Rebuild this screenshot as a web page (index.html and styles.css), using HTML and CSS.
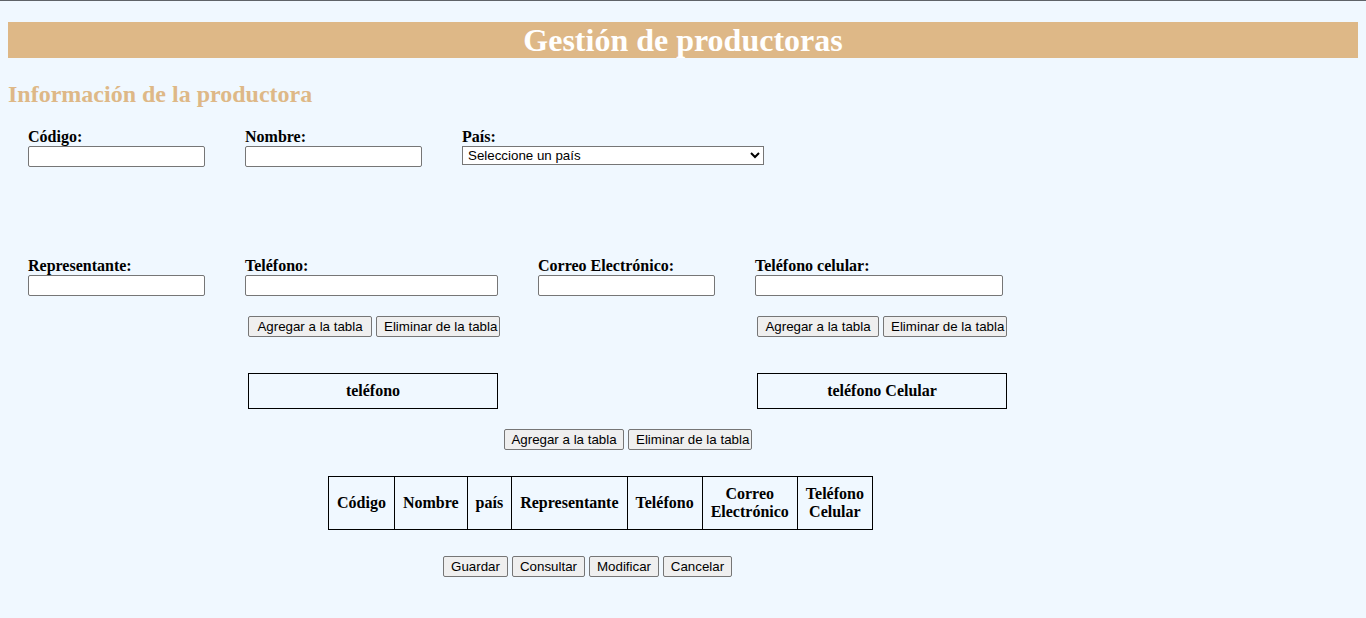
FILE: index.html
```html
<!DOCTYPE html>
<html lang="es">
<head>
<meta charset="utf-8">
<title>Gestión de productoras</title>
<link rel="stylesheet" href="styles.css">
</head>
<body>
<h1 class="title">Gestión de productoras</h1>
<h2 class="subtitle">Información de la productora</h2>
<form class="form">
  <div class="row row-top">
    <div class="field w-sm">
      <label class="lbl" for="codigo">Código:</label>
      <input class="inp w-sm" id="codigo" type="text">
    </div>
    <div class="field w-sm">
      <label class="lbl" for="nombre">Nombre:</label>
      <input class="inp w-sm" id="nombre" type="text">
    </div>
    <div class="field w-pais">
      <label class="lbl" for="pais">País:</label>
      <select class="sel" id="pais">
        <option>Seleccione un país</option>
      </select>
    </div>
  </div>

  <div class="row row-bottom">
    <div class="field w-sm">
      <label class="lbl" for="repr">Representante:</label>
      <input class="inp w-sm" id="repr" type="text">
    </div>
    <div class="field w-tel">
      <label class="lbl" for="tel">Teléfono:</label>
      <input class="inp w-tel" id="tel" type="text">
      <div class="btns btns-tel">
        <button type="button" class="btn btn-add">Agregar a la tabla</button>
        <button type="button" class="btn btn-del">Eliminar de la tabla</button>
      </div>
      <table class="mini mini-tel">
        <tr><th>teléfono</th></tr>
      </table>
    </div>
    <div class="field w-sm">
      <label class="lbl" for="correo">Correo Electrónico:</label>
      <input class="inp w-sm" id="correo" type="text">
    </div>
    <div class="field w-cel">
      <label class="lbl" for="cel">Teléfono celular:</label>
      <input class="inp w-celinp" id="cel" type="text">
      <div class="btns btns-cel">
        <button type="button" class="btn btn-add btn-add-sm">Agregar a la tabla</button>
        <button type="button" class="btn btn-del">Eliminar de la tabla</button>
      </div>
      <table class="mini mini-cel">
        <tr><th>teléfono Celular</th></tr>
      </table>
    </div>
  </div>

  <div class="btns btns-center">
    <button type="button" class="btn btn-add btn-add-xs">Agregar a la tabla</button>
    <button type="button" class="btn btn-del">Eliminar de la tabla</button>
  </div>

  <table class="main">
    <tr>
      <th>Código</th>
      <th>Nombre</th>
      <th>país</th>
      <th>Representante</th>
      <th>Teléfono</th>
      <th>Correo<br>Electrónico</th>
      <th>Teléfono<br>Celular</th>
    </tr>
  </table>

  <div class="btns btns-actions">
    <button type="button" class="btn btn-guardar">Guardar</button>
    <button type="button" class="btn btn-consultar">Consultar</button>
    <button type="button" class="btn btn-modificar">Modificar</button>
    <button type="button" class="btn btn-cancelar">Cancelar</button>
  </div>
</form>
</body>
</html>
```
FILE: styles.css
```css
html {
  background: #f0f8ff;
}
body {
  margin: 0 8px;
  padding-top: 0.1px;
  font-family: "Liberation Serif", "Times New Roman", serif;
  font-size: 16px;
  color: #000;
  position: relative;
}
body::before {
  content: "";
  position: fixed;
  top: 0;
  left: 0;
  right: 0;
  height: 1px;
  background: #5f6368;
}
.title {
  margin: 22px 0 0;
  height: 36px;
  line-height: 36px;
  background: #deb887;
  color: #fff;
  font-size: 32px;
  font-weight: bold;
  text-align: center;
}
.subtitle {
  margin: 22px 0 20px;
  line-height: 28px;
  font-size: 24px;
  font-weight: bold;
  color: #deb887;
}
.form {
  display: flex;
  flex-direction: column;
  align-items: flex-start;
}
.row {
  display: flex;
  gap: 40px;
  padding-left: 20px;
  align-items: flex-start;
}
.row-bottom {
  margin-top: 90px;
}
.field {
  display: flex;
  flex-direction: column;
  align-items: flex-start;
}
.lbl {
  display: block;
  font-weight: bold;
  line-height: 18px;
  height: 18px;
  white-space: nowrap;
}
.inp {
  box-sizing: border-box;
  height: 21px;
  margin: 0;
  background: #fff;
  border: 1px solid #767676;
  border-radius: 2px;
  padding: 1px 2px;
  font-family: "Liberation Sans", Arial, sans-serif;
  font-size: 13.33px;
}
.w-sm { width: 177px; }
.w-tel { width: 253px; }
.w-cel { width: 252px; }
.w-celinp { width: 248px; }
.w-pais { width: 302px; }
.sel {
  box-sizing: border-box;
  width: 302px;
  height: 19px;
  margin: 0;
  font-family: "Liberation Sans", Arial, sans-serif;
  font-size: 13.33px;
  background: #fff;
  border: 1px solid #767676;
  border-radius: 0;
  padding: 0 0 0 1px;
  color: #000;
}
.btns {
  display: flex;
  gap: 4px;
}
.btn {
  box-sizing: border-box;
  height: 21px;
  margin: 0;
  padding: 1px 6px;
  border: 1px solid #767676;
  border-radius: 2px;
  background: #efefef;
  color: #000;
  font-family: "Liberation Sans", Arial, sans-serif;
  font-size: 13.33px;
  line-height: 15px;
  white-space: nowrap;
  overflow: hidden;
  text-align: center;
}
.btn-add { width: 124px; }
.btn-add-sm { width: 122px; }
.btn-add-xs { width: 120px; }
.btn-del {
  width: 124px;
  padding: 1px 0 1px 7px;
  text-align: left;
}
.btn-guardar { width: 65px; }
.btn-consultar { width: 73px; }
.btn-modificar { width: 70px; }
.btn-cancelar { width: 69px; }
.btns-tel {
  margin: 20px 0 0 3px;
}
.btns-cel {
  margin: 20px 0 0 2px;
}
.mini {
  border-collapse: collapse;
  width: 250px;
  margin-top: 36px;
  border: 1px solid #000;
}
.mini-tel {
  margin-left: 3px;
}
.mini-cel {
  margin-left: 2px;
}
.mini th {
  padding: 8px;
  line-height: 18px;
  font-weight: bold;
  text-align: center;
}
.btns-center {
  margin: 20px 0 0 496px;
}
.main {
  border-collapse: collapse;
  margin: 26px 0 0 320px;
  border: 1px solid #000;
}
.main th {
  border: 1px solid #000;
  padding: 8px;
  line-height: 18px;
  font-weight: bold;
  text-align: center;
  vertical-align: middle;
}
.btns-actions {
  margin: 26px 0 0 435px;
}
```
